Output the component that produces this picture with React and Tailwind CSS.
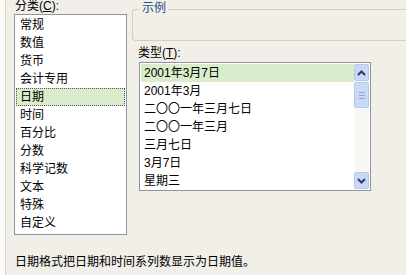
import React from 'react';

const categories = ['常规', '数值', '货币', '会计专用', '日期', '时间', '百分比', '分数', '科学记数', '文本', '特殊', '自定义'];
const types = ['2001年3月7日', '2001年3月', '二〇〇一年三月七日', '二〇〇一年三月', '三月七日', '3月7日', '星期三'];

const font = { fontFamily: '"Liberation Sans", "Noto Sans CJK SC", sans-serif' };

const Arrow = ({ down }) => (
    <svg width="9" height="6" viewBox="0 0 9 6">
        <path d={down ? 'M1 1 L4.5 4.5 L8 1' : 'M1 5 L4.5 1.5 L8 5'} fill="none" stroke="#2b3f6b" strokeWidth="2" />
    </svg>
);

export default function App() {
    return (
        <div className="flex h-[275px] w-[406px] overflow-hidden bg-[#f1efe8] text-[12px] text-black" style={font}>
            {/* window edge */}
            <div className="w-[6px] shrink-0 border-r border-[#d9d3bf] bg-[#fbfbf9]" />

            <div className="flex flex-1 flex-col pl-[8px]">
                <div className="flex">
                    {/* 分类 */}
                    <div className="flex w-[113px] flex-col">
                        <div className="h-[14px] pl-[1px] leading-[12px]">分类(<span className="underline">C</span>):</div>
                        <div className="h-[221px] border border-[#8d969e] bg-white pt-[1px]">
                            {categories.map((c) => (
                                <div
                                    key={c}
                                    className={
                                        c === '日期'
                                            ? 'mx-[1px] h-[18px] border border-dotted border-[#555] bg-[#d9edcc] pl-[3px] leading-[16px]'
                                            : 'h-[18px] pl-[5px] leading-[18px]'
                                    }
                                >
                                    {c}
                                </div>
                            ))}
                        </div>
                    </div>

                    {/* 右侧 */}
                    <div className="ml-[5px] flex flex-1 flex-col">
                        <div className="relative mt-[9px] h-[32px] rounded-l-[4px] border border-r-0 border-[#d0d0bf]">
                            <span className="absolute -top-[9px] left-[7px] bg-[#f1efe8] px-[2px] leading-[14px] text-[#22508a]">示例</span>
                        </div>
                        <div className="mt-[6px] h-[15px] pl-[6px] leading-[12px]">类型(<span className="underline">T</span>):</div>
                        <div className="ml-[7px] flex h-[129px] w-[232px] border border-[#8d969e] bg-white p-[1px]">
                            <div className="flex-1">
                                {types.map((t, i) => (
                                    <div
                                        key={t}
                                        className={
                                            i === 0
                                                ? 'h-[18px] bg-[#d9edcc] pl-[3px] leading-[18px]'
                                                : 'h-[18px] pl-[3px] leading-[18px]'
                                        }
                                    >
                                        {t}
                                    </div>
                                ))}
                            </div>
                            <div className="flex w-[15px] flex-col bg-[#f7f7f3]">
                                <div className="flex h-[17px] items-center justify-center rounded-[2px] border border-[#b8c8ea] bg-[#c9d8f6]">
                                    <Arrow />
                                </div>
                                <div className="mt-[1px] flex h-[26px] flex-col items-center justify-center gap-[2px] rounded-[2px] border border-[#b8c8ea] bg-[#cad9f7]">
                                    <div className="h-[1px] w-[6px] bg-[#8fa6d6]" />
                                    <div className="h-[1px] w-[6px] bg-[#8fa6d6]" />
                                    <div className="h-[1px] w-[6px] bg-[#8fa6d6]" />
                                </div>
                                <div className="flex-1" />
                                <div className="flex h-[17px] items-center justify-center rounded-[2px] border border-[#b8c8ea] bg-[#c9d8f6]">
                                    <Arrow down />
                                </div>
                            </div>
                        </div>
                    </div>
                </div>

                <div className="mt-[20px] pl-[1px] leading-[14px]">日期格式把日期和时间系列数显示为日期值。</div>
            </div>
        </div>
    );
}
